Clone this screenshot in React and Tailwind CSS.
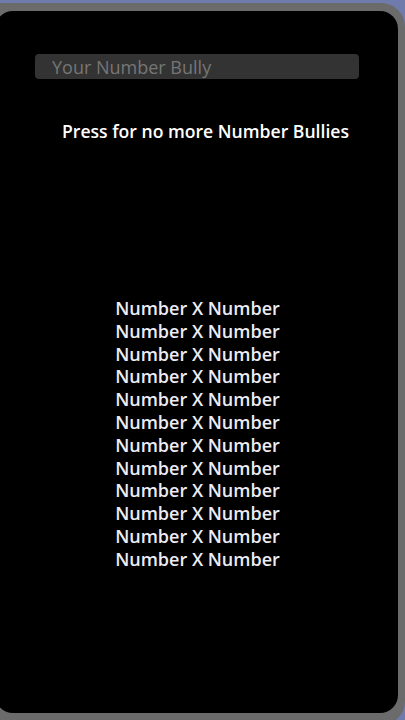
export default function App() {
  const rows = Array.from({ length: 12 });
  return (
    <div className="w-[405px] h-[720px] overflow-hidden bg-[#6f7bab]" style={{ fontFamily: '"Open Sans", "Noto Sans", sans-serif' }}>
      <div className="mt-[3px] ml-[-20px] w-[425px] h-[722px] rounded-[24px] bg-[#6b6b6b] pt-[8px] pl-[15px] pr-[7px] pb-[9px]">
        <div className="w-[403px] h-[702px] rounded-[18px] bg-black flex flex-col">
          <div className="mt-[43px] ml-[40px] w-[324px] h-[25px] rounded-[4px] bg-[#333333] flex items-center pl-[17px]">
            <span className="text-[18px] text-[#767676] leading-none">Your Number Bully</span>
          </div>
          <div className="mt-[41px] ml-[67px] text-[17.6px] font-semibold text-white leading-[22px]">Press for no more Number Bullies</div>
          <div className="mt-[155px] ml-[2px] flex flex-col items-center text-[18px] font-semibold text-[#ececf4] leading-[22.8px]">
            {rows.map((_, i) => (
              <div key={i}>Number X Number</div>
            ))}
          </div>
        </div>
      </div>
    </div>
  );
}
